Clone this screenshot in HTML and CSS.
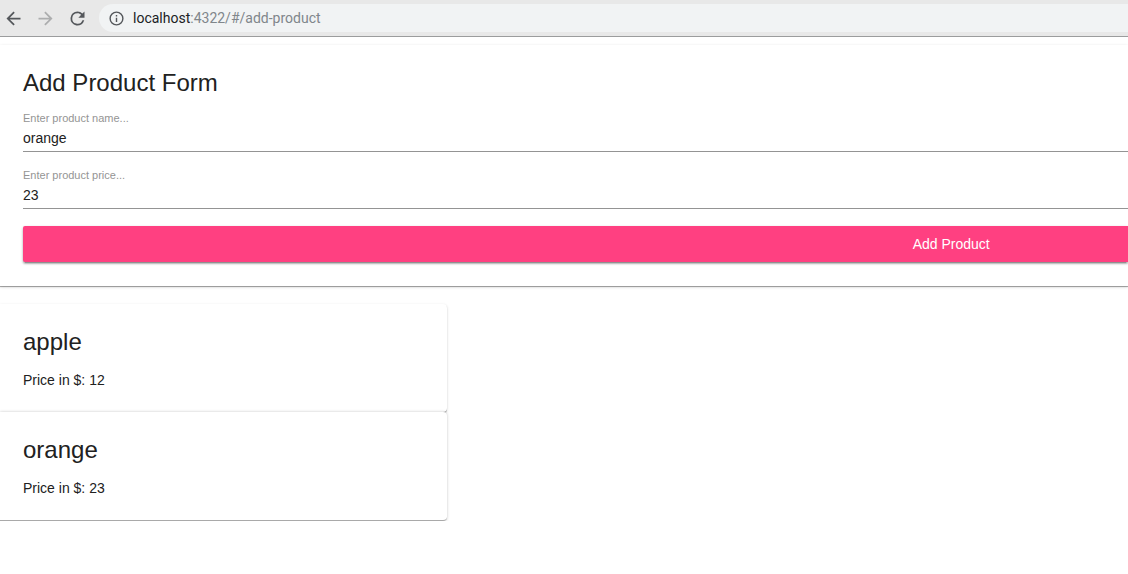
FILE: index.html
```html
<!DOCTYPE html>
<html lang="en">
<head>
<meta charset="utf-8">
<title>Add Product</title>
<link rel="stylesheet" href="styles.css">
</head>
<body>
<header class="toolbar">
  <nav class="nav" aria-label="Browser controls">
    <button class="nav-button" type="button" aria-label="Back">
      <svg viewBox="0 0 24 24"><path d="M20 11H7.83l5.59-5.59L12 4l-8 8 8 8 1.41-1.41L7.83 13H20z"/></svg>
    </button>
    <button class="nav-button nav-button-muted" type="button" aria-label="Forward">
      <svg viewBox="0 0 24 24"><path d="M12 4l-1.41 1.41L16.17 11H4v2h12.17l-5.58 5.59L12 20l8-8z"/></svg>
    </button>
    <button class="nav-button" type="button" aria-label="Reload">
      <svg viewBox="0 0 24 24"><path d="M17.65 6.35A7.96 7.96 0 0 0 12 4a8 8 0 1 0 7.73 10h-2.08A6 6 0 1 1 12 6c1.66 0 3.14.69 4.22 1.78L13 11h7V4z"/></svg>
    </button>
  </nav>
  <div class="address">
    <svg class="info" viewBox="0 0 24 24"><path d="M11 17h2v-6h-2zm1-15a10 10 0 1 0 0 20 10 10 0 0 0 0-20zm0 18a8 8 0 1 1 0-16 8 8 0 0 1 0 16zM11 9h2V7h-2z"/></svg>
    <span class="url"><span class="host">localhost</span>:4322/#/add-product</span>
  </div>
</header>
<main class="page">
  <form class="card form-card">
    <h1 class="title">Add Product Form</h1>
    <div class="fields">
      <div class="field">
        <label class="label" for="name">Enter product name...</label>
        <input class="input" id="name" type="text" value="orange">
      </div>
      <div class="field">
        <label class="label" for="price">Enter product price...</label>
        <input class="input" id="price" type="text" value="23">
      </div>
      <button class="submit" type="button">Add Product</button>
    </div>
  </form>
  <section class="products">
    <article class="card">
      <h2 class="title">apple</h2>
      <p class="price">Price in $: 12</p>
    </article>
    <article class="card">
      <h2 class="title">orange</h2>
      <p class="price">Price in $: 23</p>
    </article>
  </section>
</main>
</body>
</html>
```

FILE: styles.css
```css
* {
  box-sizing: border-box;
}

body {
  margin: 0;
  background: #fff;
  color: #212121;
  font: 14px/16px "Liberation Sans", Arial, sans-serif;
}

.toolbar {
  display: flex;
  align-items: center;
  gap: 11px;
  padding: 4px 0;
  border-bottom: 1px solid #9b9c9d;
  background: #e8e8e8;
}

.nav {
  display: flex;
  gap: 11px;
  padding-left: 3px;
}

.nav-button {
  display: flex;
  padding: 0;
  border: 0;
  background: none;
  color: #54575b;
}

.nav-button-muted {
  color: #acadae;
}

.nav-button svg {
  width: 21px;
  height: 21px;
  fill: currentColor;
}

.address {
  display: flex;
  flex: 1;
  align-items: center;
  gap: 8px;
  height: 28px;
  padding-left: 9px;
  border-radius: 14px 0 0 14px;
  background: #f1f3f4;
}

.info {
  width: 17px;
  height: 17px;
  fill: #54575b;
}

.url {
  color: #80868b;
  font: 14px/20px Roboto, "Noto Sans", sans-serif;
}

.host {
  color: #202124;
}

.page {
  padding-top: 8px;
}

.card {
  padding: 24px 24px 24px 23px;
  border-radius: 0 4px 4px 0;
  background: #fff;
  box-shadow:
    0 1px 0 0 rgba(0, 0, 0, 0.2),
    0 1px 1px 0 rgba(0, 0, 0, 0.14),
    0 1px 3px 0 rgba(0, 0, 0, 0.16);
}

/* The form bleeds off the right edge. */
.form-card {
  margin-bottom: 18px;
  padding-right: 0;
  border-radius: 0;
}

.title {
  margin: 0 0 16px;
  font-size: 24px;
  font-weight: 400;
  line-height: 28px;
}

.form-card .title {
  margin-bottom: 15px;
}

.fields {
  display: flex;
  flex-direction: column;
  gap: 17px;
}

.field {
  display: flex;
  flex-direction: column;
}

.label {
  color: #949494;
  font-size: 11px;
  line-height: 12px;
}

.input {
  height: 28px;
  padding: 0;
  border: 0;
  border-bottom: 1px solid #949494;
  outline: 0;
  background: none;
  color: #212121;
  font: inherit;
}

.submit {
  height: 36px;
  padding: 0 0 0 68%;
  border: 0;
  border-radius: 2px 0 0 2px;
  background: #ff4081;
  color: #fff;
  font: inherit;
  box-shadow:
    0 3px 1px -2px rgba(0, 0, 0, 0.2),
    0 2px 2px 0 rgba(0, 0, 0, 0.2),
    0 1px 3px 0 rgba(0, 0, 0, 0.2);
}

.products {
  width: 447px;
}

.products .card:last-child {
  border-bottom: 1px solid #a9a9a9;
  box-shadow: 0 0 3px rgba(0, 0, 0, 0.24);
}

.price {
  margin: 0;
}
```
